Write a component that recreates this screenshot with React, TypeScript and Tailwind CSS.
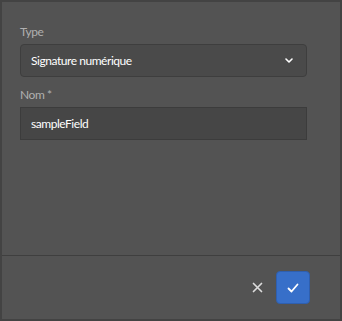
import { useState } from 'react'

export default function App() {
  const [name, setName] = useState('sampleField')

  return (
    <div className="w-[342px] h-[321px] bg-[#535353] border-2 border-[#434343] flex flex-col tracking-[-0.45px]" style={{ fontFamily: 'Lato, "Open Sans", sans-serif' }}>
      {/* Form */}
      <div className="flex-1 pl-[18px] pt-[22px]">
        <label className="block text-[12px] leading-4 text-[#b0b0b0] mb-1">Type</label>
        <button className="w-[287px] h-[33px] flex items-center justify-between pl-[10px] pr-[13px] bg-[#4a4a4a] border border-[#3e3e3e] rounded-[4px] text-[12px] text-white tracking-[-0.45px]">
          <span>Signature numérique</span>
          <svg width="8" height="5" viewBox="0 0 8 5" fill="none">
            <path d="M1 1l3 3 3-3" stroke="#fff" strokeWidth="1.6" strokeLinecap="round" strokeLinejoin="round" />
          </svg>
        </button>

        <label className="block mt-[10px] text-[12px] leading-4 text-[#b0b0b0] mb-1">Nom *</label>
        <input
          value={name}
          onChange={(e) => setName(e.target.value)}
          className="w-[287px] h-[33px] px-[10px] bg-[#464646] border border-[#3c3c3c] text-[12px] text-white outline-none tracking-[-0.45px]"
        />
      </div>

      {/* Footer */}
      <div className="h-[64px] border-t border-[#3f3f3f] flex items-center justify-end pr-[30px] gap-[7px]">
        <button className="w-6 h-6 flex items-center justify-center">
          <svg width="11" height="11" viewBox="0 0 11 11" fill="none">
            <path d="M1.5 1.5l8 8M9.5 1.5l-8 8" stroke="#dcdcdc" strokeWidth="1.7" strokeLinecap="round" />
          </svg>
        </button>
        <button className="w-[34px] h-[33px] rounded-[4px] bg-[#376fc9] border border-[#2f5fae] flex items-center justify-center">
          <svg width="12" height="10" viewBox="0 0 12 10" fill="none">
            <path d="M1.5 5.5l3 3L10.5 1.5" stroke="#fff" strokeWidth="1.8" strokeLinecap="round" strokeLinejoin="round" />
          </svg>
        </button>
      </div>
    </div>
  )
}
